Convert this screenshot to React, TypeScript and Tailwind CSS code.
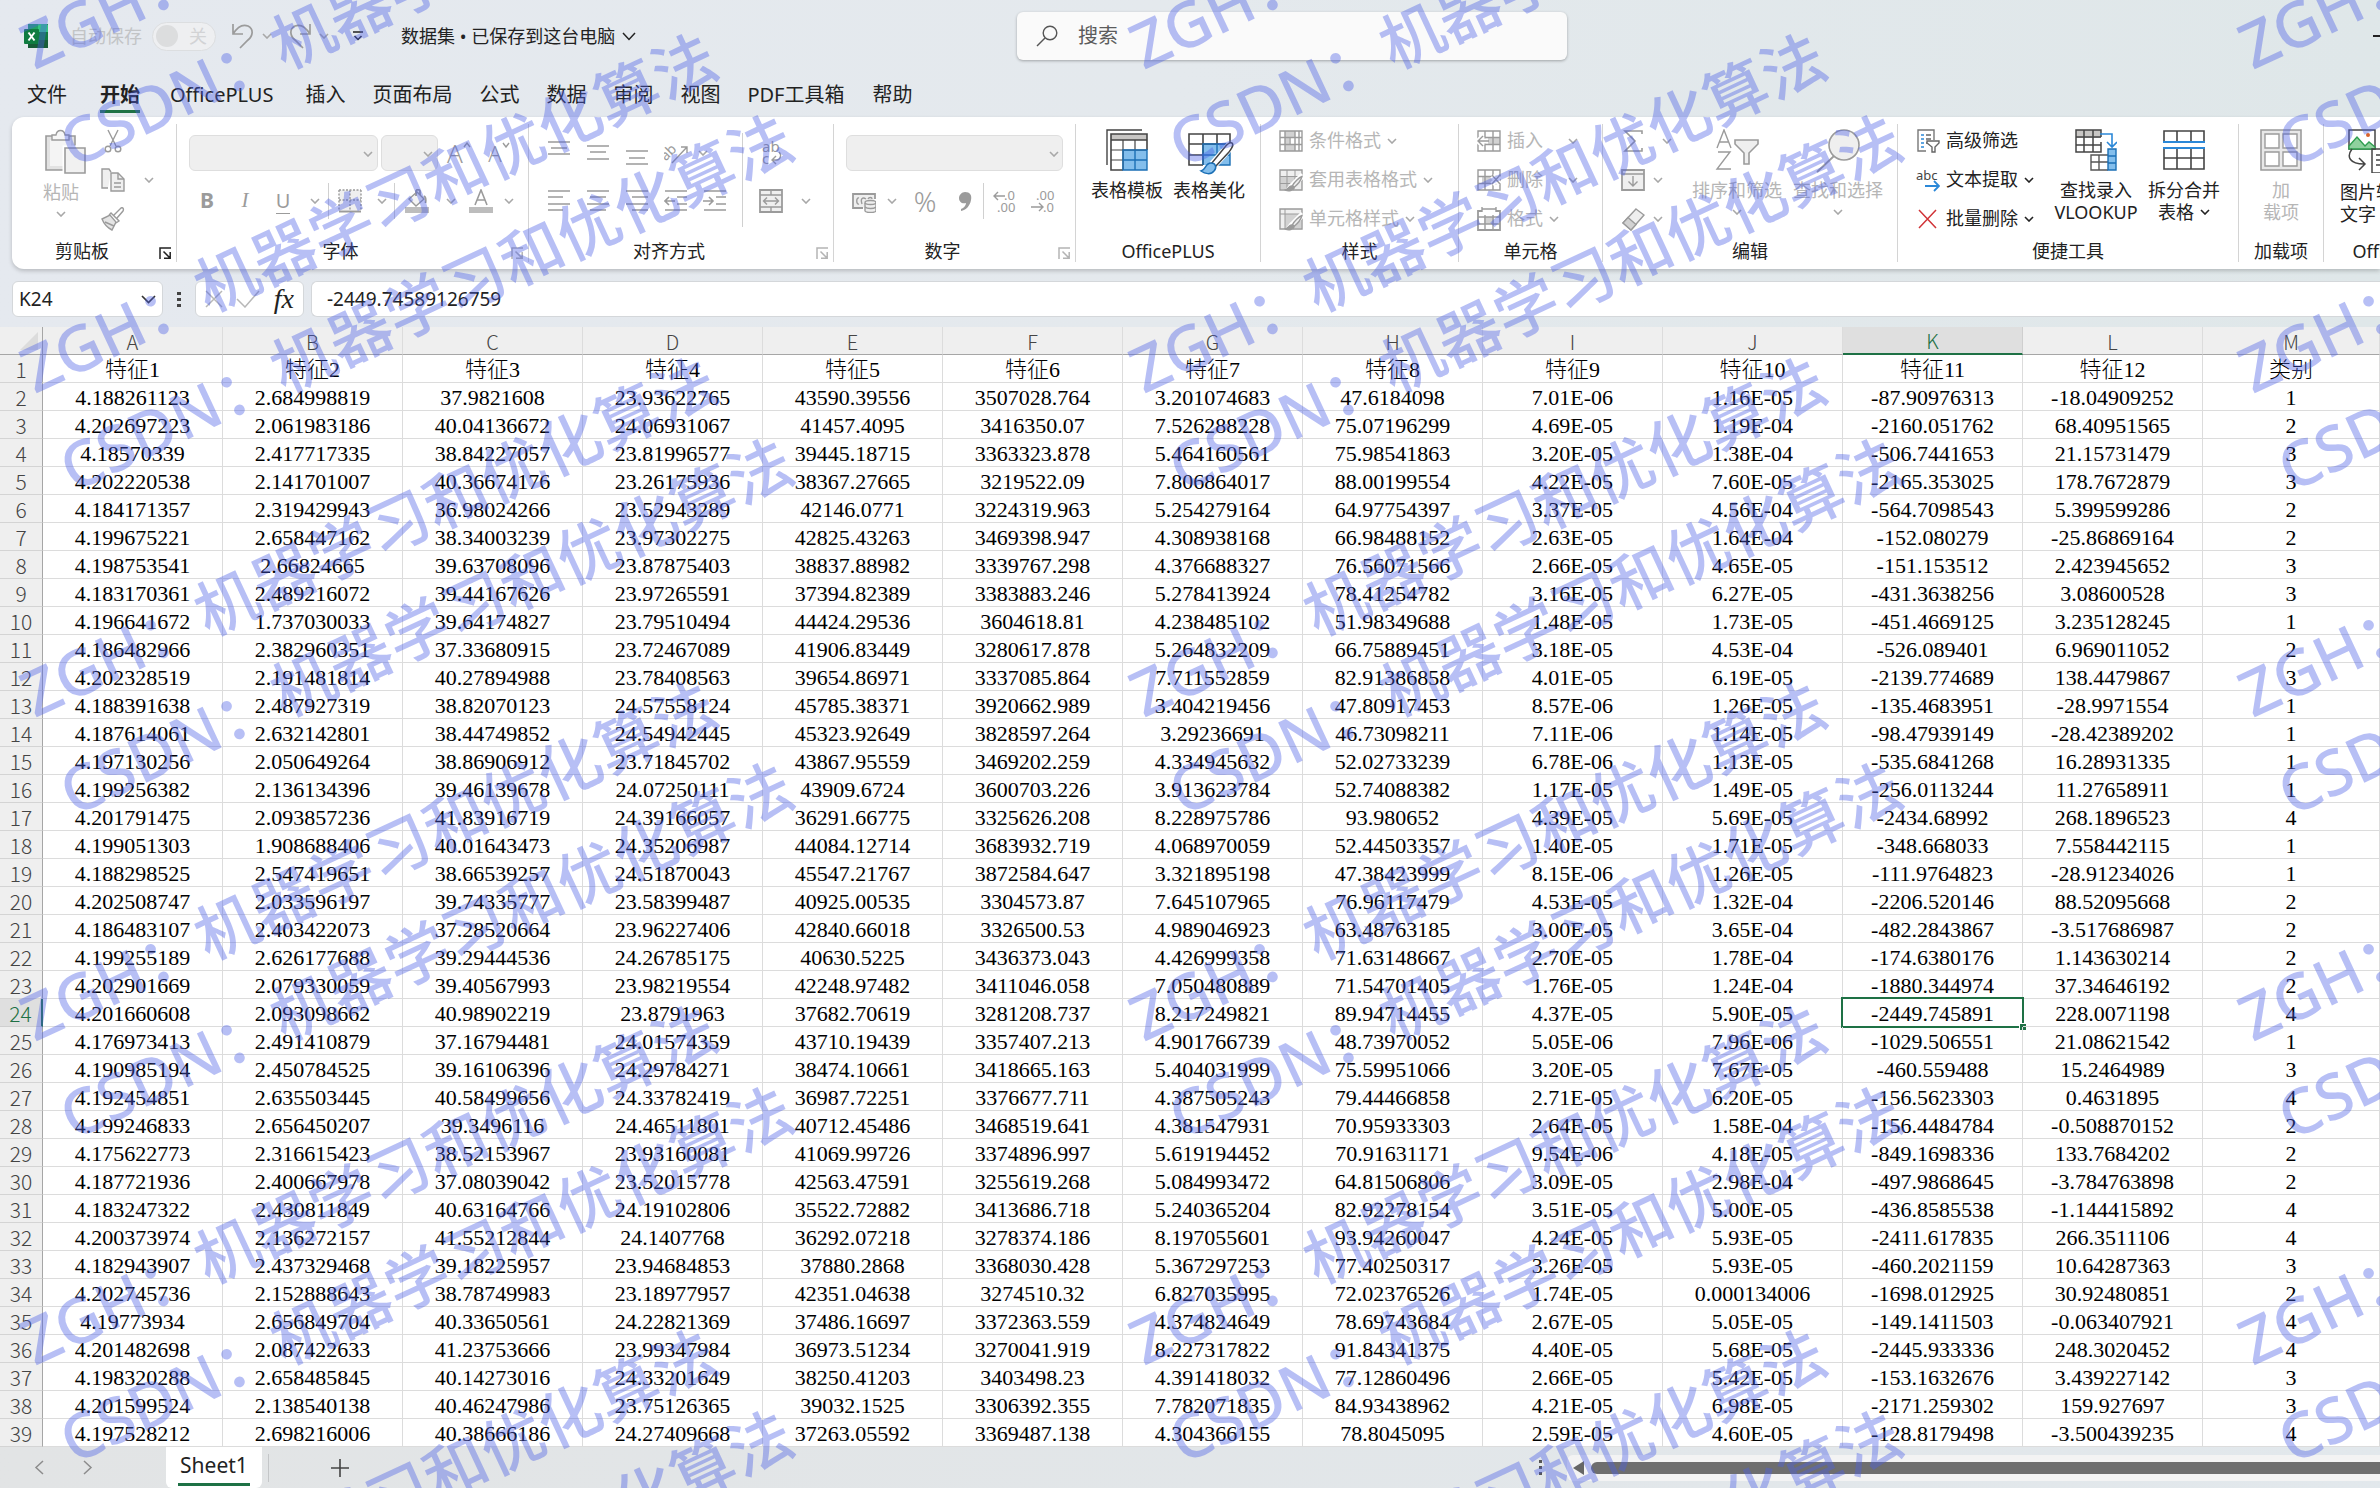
import type { ReactNode } from "react";

const columns = ["A", "B", "C", "D", "E", "F", "G", "H", "I", "J", "K", "L", "M"];

const rows = `特征1 特征2 特征3 特征4 特征5 特征6 特征7 特征8 特征9 特征10 特征11 特征12 类别
4.188261123 2.684998819 37.9821608 23.93622765 43590.39556 3507028.764 3.201074683 47.6184098 7.01E-06 1.16E-05 -87.90976313 -18.04909252 1
4.202697223 2.061983186 40.04136672 24.06931067 41457.4095 3416350.07 7.526288228 75.07196299 4.69E-05 1.19E-04 -2160.051762 68.40951565 2
4.18570339 2.417717335 38.84227057 23.81996577 39445.18715 3363323.878 5.464160561 75.98541863 3.20E-05 1.38E-04 -506.7441653 21.15731479 3
4.202220538 2.141701007 40.36674176 23.26175936 38367.27665 3219522.09 7.806864017 88.00199554 4.22E-05 7.60E-05 -2165.353025 178.7672879 3
4.184171357 2.319429943 36.98024266 23.52943289 42146.0771 3224319.963 5.254279164 64.97754397 3.37E-05 4.56E-04 -564.7098543 5.399599286 2
4.199675221 2.658447162 38.34003239 23.97302275 42825.43263 3469398.947 4.308938168 66.98488152 2.63E-05 1.64E-04 -152.080279 -25.86869164 2
4.198753541 2.66824665 39.63708096 23.87875403 38837.88982 3339767.298 4.376688327 76.56071566 2.66E-05 4.65E-05 -151.153512 2.423945652 3
4.183170361 2.489216072 39.44167626 23.97265591 37394.82389 3383883.246 5.278413924 78.41254782 3.16E-05 6.27E-05 -431.3638256 3.08600528 3
4.196641672 1.737030033 39.64174827 23.79510494 44424.29536 3604618.81 4.238485102 51.98349688 1.48E-05 1.73E-05 -451.4669125 3.235128245 1
4.186482966 2.382960351 37.33680915 23.72467089 41906.83449 3280617.878 5.264832209 66.75889451 3.18E-05 4.53E-04 -526.089401 6.969011052 2
4.202328519 2.191481814 40.27894988 23.78408563 39654.86971 3337085.864 7.711552859 82.91386858 4.01E-05 6.19E-05 -2139.774689 138.4479867 3
4.188391638 2.487927319 38.82070123 24.57558124 45785.38371 3920662.989 3.404219456 47.80917453 8.57E-06 1.26E-05 -135.4683951 -28.9971554 1
4.187614061 2.632142801 38.44749852 24.54942445 45323.92649 3828597.264 3.29236691 46.73098211 7.11E-06 1.14E-05 -98.47939149 -28.42389202 1
4.197130256 2.050649264 38.86906912 23.71845702 43867.95559 3469202.259 4.334945632 52.02733239 6.78E-06 1.13E-05 -535.6841268 16.28931335 1
4.199256382 2.136134396 39.46139678 24.07250111 43909.6724 3600703.226 3.913623784 52.74088382 1.17E-05 1.49E-05 -256.0113244 11.27658911 1
4.201791475 2.093857236 41.83916719 24.39166057 36291.66775 3325626.208 8.228975786 93.980652 4.39E-05 5.69E-05 -2434.68992 268.1896523 4
4.199051303 1.908688406 40.01643473 24.35206987 44084.12714 3683932.719 4.068970059 52.44503357 1.40E-05 1.71E-05 -348.668033 7.558442115 1
4.188298525 2.547419651 38.66539257 24.51870043 45547.21767 3872584.647 3.321895198 47.38423999 8.15E-06 1.26E-05 -111.9764823 -28.91234026 1
4.202508747 2.033596197 39.74335777 23.58399487 40925.00535 3304573.87 7.645107965 76.96117479 4.53E-05 1.32E-04 -2206.520146 88.52095668 2
4.186483107 2.403422073 37.28520664 23.96227406 42840.66018 3326500.53 4.989046923 63.48763185 3.00E-05 3.65E-04 -482.2843867 -3.517686987 2
4.199255189 2.626177688 39.29444536 24.26785175 40630.5225 3436373.043 4.426999358 71.63148667 2.70E-05 1.78E-04 -174.6380176 1.143630214 2
4.202901669 2.079330059 39.40567993 23.98219554 42248.97482 3411046.058 7.050480889 71.54701405 1.76E-05 1.24E-04 -1880.344974 37.34646192 2
4.201660608 2.093098662 40.98902219 23.8791963 37682.70619 3281208.737 8.217249821 89.94714455 4.37E-05 5.90E-05 -2449.745891 228.0071198 4
4.176973413 2.491410879 37.16794481 24.01574359 43710.19439 3357407.213 4.901766739 48.73970052 5.05E-06 7.96E-06 -1029.506551 21.08621542 1
4.190985194 2.450784525 39.16106396 24.29784271 38474.10661 3418665.163 5.404031999 75.59951066 3.20E-05 7.67E-05 -460.559488 15.2464989 3
4.192454851 2.635503445 40.58499656 24.33782419 36987.72251 3376677.711 4.387505243 79.44466858 2.71E-05 6.20E-05 -156.5623303 0.4631895 4
4.199246833 2.656450207 39.3496116 24.46511801 40712.45486 3468519.641 4.381547931 70.95933303 2.64E-05 1.58E-04 -156.4484784 -0.508870152 2
4.175622773 2.316615423 38.52153967 23.93160081 41069.99726 3374896.997 5.619194452 70.91631171 9.54E-06 4.18E-05 -849.1698336 133.7684202 2
4.187721936 2.400667978 37.08039042 23.52015778 42563.47591 3255619.268 5.084993472 64.81506806 3.09E-05 2.98E-04 -497.9868645 -3.784763898 2
4.183247322 2.430811849 40.63164766 24.19102806 35522.72882 3413686.718 5.240365204 82.92278154 3.51E-05 5.00E-05 -436.8585538 -1.144415892 4
4.200373974 2.136272157 41.55212844 24.1407768 36292.07218 3278374.186 8.197055601 93.94260047 4.24E-05 5.93E-05 -2411.617835 266.3511106 4
4.182943907 2.437329468 39.18225957 23.94684853 37880.2868 3368030.428 5.367297253 77.40250317 3.26E-05 5.93E-05 -460.2021159 10.64287363 3
4.202745736 2.152888643 38.78749983 23.18977957 42351.04638 3274510.32 6.827035995 72.02376526 1.74E-05 0.000134006 -1698.012925 30.92480851 2
4.19773934 2.656849704 40.33650561 24.22821369 37486.16697 3372363.559 4.374824649 78.69743684 2.67E-05 5.05E-05 -149.1411503 -0.063407921 4
4.201482698 2.087422633 41.23753666 23.99347984 36973.51234 3270041.919 8.227317822 91.84341375 4.40E-05 5.68E-05 -2445.933336 248.3020452 4
4.198320288 2.658485845 40.14273016 24.33201649 38250.41203 3403498.23 4.391418032 77.12860496 2.66E-05 5.42E-05 -153.1632676 3.439227142 3
4.201599524 2.138540138 40.46247986 23.75126365 39032.1525 3306392.355 7.782071835 84.93438962 4.21E-05 6.98E-05 -2171.259302 159.927697 3
4.197528212 2.698216006 40.38666186 24.27409668 37263.05592 3369487.138 4.304366155 78.8045095 2.59E-05 4.60E-05 -128.8179498 -3.500439235 4`
  .split("\n")
  .map((line) => line.split(" "));

const tabs = [
  { name: "文件", gap: "mr-[33px]" },
  { name: "开始", gap: "mr-[30px]" },
  { name: "OfficePLUS", gap: "mr-[32px]" },
  { name: "插入", gap: "mr-[27px]" },
  { name: "页面布局", gap: "mr-[27px]" },
  { name: "公式", gap: "mr-[27px]" },
  { name: "数据", gap: "mr-[27px]" },
  { name: "审阅", gap: "mr-[27px]" },
  { name: "视图", gap: "mr-[27px]" },
  { name: "PDF工具箱", gap: "mr-[28px]" },
  { name: "帮助", gap: "" },
];

const Chevron = ({ className = "text-[#a8a8a8]" }: { className?: string }) => (
  <svg className={`w-[10px] h-[6px] shrink-0 ${className}`} viewBox="0 0 10 6" fill="none" stroke="currentColor" strokeWidth="1.6">
    <path d="M1 1l4 4 4-4" />
  </svg>
);

const Icon = ({ className = "w-6 h-6", box = "0 0 24 24", children }: { className?: string; box?: string; children: ReactNode }) => (
  <svg className={`shrink-0 ${className}`} viewBox={box} fill="none" stroke="#9b9b9b" strokeWidth="1.4">
    {children}
  </svg>
);

const Divider = () => <span className="w-px h-9 bg-[#d0d0d0]" />;

const Separator = () => <div className="w-px my-[7px] shrink-0 bg-[#d4d4d4]" />;

const Group = ({ label, width, launcher, children }: { label: string; width: string; launcher?: "on" | "off"; children: ReactNode }) => (
  <section className={`flex flex-col shrink-0 pt-1 ${width}`}>
    <div className="h-[117px] flex">{children}</div>
    <div className="flex items-center h-[26px]">
      <h2 className="flex-1 text-center text-[18px] leading-[26px] text-[#222] whitespace-nowrap">{label}</h2>
      {launcher && (
        <button aria-label={`${label}设置`} className="w-6 h-[26px] pt-1 pl-[7px] flex items-center">
          <svg className={`w-3 h-3 ${launcher === "on" ? "text-[#222]" : "text-[#b4b4b4]"}`} viewBox="0 0 12 12" fill="none" stroke="currentColor" strokeWidth="1.5">
            <path d="M1 12V1h11M4.5 4.5l6 6M11.2 5v6.2H5" />
          </svg>
        </button>
      )}
    </div>
  </section>
);

const IconButton = ({ label, className = "w-[39px]", children }: { label: string; className?: string; children: ReactNode }) => (
  <button aria-label={label} className={`h-9 flex items-center justify-center shrink-0 ${className}`}>
    {children}
  </button>
);

const SmallButton = ({ label, icon, dark, arrow = true, wide }: { label: string; icon: ReactNode; dark?: boolean; arrow?: boolean; wide?: boolean }) => (
  <button className={`flex items-center h-[39px] whitespace-nowrap text-[18px] ${dark ? "text-[#222]" : "text-[#b6b6b6]"}`}>
    {icon}
    <span className={wide ? "ml-[6px] w-[61px] text-left" : "ml-[6px] mr-[6px]"}>{label}</span>
    {arrow && <Chevron className={dark ? "text-[#222]" : "text-[#a8a8a8]"} />}
  </button>
);

const LargeButton = ({ lines, icon, dark, arrow, className = "" }: { lines: string[]; icon: ReactNode; dark?: boolean; arrow?: "below" | "inline"; className?: string }) => (
  <button className={`flex flex-col items-center pt-2 whitespace-nowrap text-[18px] leading-[22px] ${dark ? "text-[#222]" : "text-[#b6b6b6]"} ${className}`}>
    {icon}
    <span className="mt-2">{lines[0]}</span>
    {lines[1] && (
      <span className="flex items-center gap-[6px]">
        {lines[1]}
        {arrow === "inline" && <Chevron className="text-[#222]" />}
      </span>
    )}
    {arrow === "below" && (
      <span className="h-[22px] flex items-center">
        <Chevron />
      </span>
    )}
  </button>
);

/* Horizontal bars of the alignment buttons */
const Bars = ({ d }: { d: string }) => (
  <Icon>
    <path strokeWidth="1.6" d={d} />
  </Icon>
);

const gridLines = "M1 2h22v20H1zM1 8.5h22M1 15.5h22M8 2v20M16 2v20";

const BrushGrid = ({ header }: { header?: boolean }) => (
  <Icon>
    <path fill="#efefef" d="M1 2h22v20H1z" />
    <path fill="#d2d2d2" stroke="none" d={header ? "M6 7h16v14H6z" : "M2 9h14v12H2z"} />
    <path d={header ? "M1 7h22M6 2v20" : "M1 8.5h22M1 15.5h12M8 2v20M16 2v11"} strokeWidth="1" />
    <path stroke="#fff" strokeWidth="6" d="M24 7L12 19M14 17l-5 6" />
    <path fill="#efefef" d="M23 8.5c-3 1-8 6-9.500 9l1.800 1.700C18 17 22 12 23 8.500z" />
    <path fill="#9b9b9b" d="M12.500 18c-2.500 0-3 3-6 4 3 1.500 8 .5 8.500-2z" />
  </Icon>
);

const ClipboardGroup = () => (
  <Group label="剪贴板" width="w-[164px]" launcher="on">
    <LargeButton
      className="w-[72px] ml-[13px]"
      lines={["粘贴"]}
      arrow="below"
      icon={
        <Icon className="w-[42px] h-[46px] ml-[7px] -mb-[2px]" box="0 0 42 46">
          <path fill="#e2e2e2" strokeWidth="1.6" d="M2 7h29v34H2z" />
          <path fill="#f4f4f4" stroke="none" d="M6 11h21v26H6z" />
          <path fill="#f7f7f7" d="M8 11V6h4c1-6 8-6 9 0h4v5z" />
          <path fill="#f4f4f4" stroke="#fff" strokeWidth="5" d="M21 19h20v25H21z" />
          <path fill="#f1f1f1" strokeWidth="1.600" d="M21 19h20v25H21z" />
        </Icon>
      }
    />
    <div className="flex flex-col ml-1">
      <button aria-label="剪切" className="h-[39px] w-6 flex items-center">
        <Icon>
          <path d="M7 1l8 16M17 1L9 17" />
          <circle cx="7" cy="20" r="2.800" />
          <circle cx="17" cy="20" r="2.800" />
        </Icon>
      </button>
      <button aria-label="复制" className="h-[39px] w-6 flex items-center">
        <Icon>
          <path fill="#efefef" d="M7 20H1V1h7l2 3" />
          <path fill="#efefef" d="M10 5h7l6 6v12H10z" />
          <path d="M17 5v6h6M13 15h7M13 19h7" />
        </Icon>
      </button>
      <button aria-label="格式刷" className="h-[39px] w-6 flex items-center">
        <Icon>
          <path fill="#e4e4e4" d="M1 12l8-4 6 7-4 8C7 21 3 17 1 12z" />
          <path d="M8 8l2-2 8 8-3 2M13 8l7-7c2-1 3 1 2 3l-6 7M4 15l9 4" />
        </Icon>
      </button>
    </div>
    <button aria-label="复制选项" className="ml-[19px] w-4 h-[117px]">
      <Chevron />
    </button>
  </Group>
);

const FontGroup = () => (
  <Group label="字体" width="w-[351px]" launcher="off">
    <div className="flex flex-col gap-3 pl-3 pt-[14px]">
      <div className="flex items-center">
        <div className="relative">
          <select aria-label="字体" disabled className="block appearance-none w-[189px] h-9 rounded-md bg-[#efefef] border border-[#dedede]" />
          <Chevron className="absolute right-[5px] top-4 text-[#a8a8a8]" />
        </div>
        <div className="relative ml-[3px]">
          <select aria-label="字号" disabled className="block appearance-none w-[57px] h-9 rounded-md bg-[#efefef] border border-[#dedede]" />
          <Chevron className="absolute right-[5px] top-4 text-[#a8a8a8]" />
        </div>
        <IconButton label="增大字号" className="w-[42px]">
          <span className="text-[26px] leading-9 font-light text-[#9b9b9b]">A</span>
          <svg className="w-2 h-[6px] mb-4" viewBox="0 0 8 6" fill="none" stroke="#9b9b9b" strokeWidth="1.4"><path d="M1 5l3-4 3 4" /></svg>
        </IconButton>
        <IconButton label="减小字号" className="w-[38px]">
          <span className="text-[22px] leading-9 font-light text-[#9b9b9b]">A</span>
          <svg className="w-2 h-[6px] mb-4" viewBox="0 0 8 6" fill="none" stroke="#9b9b9b" strokeWidth="1.4"><path d="M1 1l3 4 3-4" /></svg>
        </IconButton>
      </div>
      <div className="flex items-center text-[#9b9b9b]">
        <IconButton label="加粗" className="w-9"><b className="text-[21px]">B</b></IconButton>
        <IconButton label="倾斜" className="w-10"><i className="text-[21px] font-['Liberation_Serif',serif]">I</i></IconButton>
        <IconButton label="下划线" className="w-9"><span className="text-[20px] leading-6 border-b border-[#9b9b9b]">U</span></IconButton>
        <IconButton label="下划线选项" className="w-[27px]"><Chevron /></IconButton>
        <Divider />
        <IconButton label="边框" className="w-[41px]">
          <Icon>
            <path fill="#efefef" stroke="none" d="M1 1h22v20H1z" />
            <path strokeDasharray="2 1.500" d="M1 1h22M1 1v20M23 1v20M12 1v20M1 11h22" />
            <path strokeWidth="1.800" d="M1 22.500h22" />
          </Icon>
        </IconButton>
        <IconButton label="边框选项" className="w-6"><Chevron /></IconButton>
        <Divider />
        <IconButton label="填充颜色" className="w-[44px]">
          <Icon>
            <path fill="#bdbdbd" stroke="none" d="M0 18h24v6H0z" />
            <path fill="#f4f4f4" d="M4 10l8-7 7 7-8 7z" />
            <path d="M11 7V2c1-2 3-2 4 0v4M19 7c2 1 2 4 1.500 7" strokeWidth="1.800" />
          </Icon>
        </IconButton>
        <IconButton label="填充颜色选项" className="w-6"><Chevron /></IconButton>
        <IconButton label="字体颜色" className="w-9">
          <Icon>
            <path fill="#bdbdbd" stroke="none" d="M0 18h24v6H0z" />
            <path strokeWidth="1.600" d="M6 16l6-15 6 15M8 11h8" />
          </Icon>
        </IconButton>
        <IconButton label="字体颜色选项" className="w-5"><Chevron /></IconButton>
      </div>
    </div>
  </Group>
);

const AlignGroup = () => (
  <Group label="对齐方式" width="w-[304px]" launcher="off">
    <div className="flex flex-col gap-3 pl-[10px] pt-[14px]">
      <div className="flex items-center">
        <IconButton label="顶端对齐"><Bars d="M1 1h22M4 7h16M1 13h22" /></IconButton>
        <IconButton label="垂直居中"><Bars d="M1 5h22M4 11h16M1 18h22" /></IconButton>
        <IconButton label="底端对齐"><Bars d="M1 10h22M4 17h16M1 23h22" /></IconButton>
        <IconButton label="方向">
          <Icon>
            <text x="-3" y="15" transform="rotate(-45 6 12)" fontSize="14" fill="#9b9b9b" stroke="none">ab</text>
            <path d="M8 22L23 6M17 6h6v6" />
          </Icon>
        </IconButton>
        <IconButton label="方向选项" className="w-4"><Chevron /></IconButton>
      </div>
      <div className="flex items-center">
        <IconButton label="左对齐"><Bars d="M1 2h22M1 8h15M1 15h22M1 21h15" /></IconButton>
        <IconButton label="居中"><Bars d="M1 2h22M4 8h16M1 15h22M4 21h16" /></IconButton>
        <IconButton label="右对齐"><Bars d="M1 2h22M7 8h16M1 15h22M7 21h16" /></IconButton>
        <IconButton label="减少缩进"><Bars d="M1 2h22M13 8h10M13 15h10M1 21h22M11 12H2M5 8l-4 4 4 4" /></IconButton>
        <IconButton label="增加缩进"><Bars d="M1 2h22M13 8h10M13 15h10M1 21h22M0 12h9M6 8l4 4-4 4" /></IconButton>
      </div>
    </div>
    <span className="w-px h-[94px] mt-3 ml-[8px] bg-[#d0d0d0]" />
    <div className="flex flex-col gap-3 pt-[14px] pl-[8px]">
      <IconButton label="自动换行">
        <Icon>
          <text x="3" y="11" fontSize="15" fill="#9b9b9b" stroke="none">ab</text>
          <text x="3" y="23" fontSize="15" fill="#9b9b9b" stroke="none">c</text>
          <path d="M20 11c3 3 1 8-2 8h-5M17 15l-4 4 4 4" />
        </Icon>
      </IconButton>
      <div className="flex">
        <IconButton label="合并后居中">
          <Icon>
            <path fill="#efefef" strokeWidth="1.800" d="M1 1h22v22H1z" />
            <path d="M1 6h22M1 18h22M12 1v5M12 18v5M5 12h14M8 8.500L4.500 12 8 15.500M16 8.500l3.500 3.500-3.500 3.500" />
          </Icon>
        </IconButton>
        <IconButton label="合并选项" className="w-8"><Chevron /></IconButton>
      </div>
    </div>
  </Group>
);

const NumberGroup = () => (
  <Group label="数字" width="w-[241px]" launcher="off">
    <div className="flex flex-col gap-3 pl-3 pt-[14px]">
      <div className="relative">
        <select aria-label="数字格式" disabled className="block appearance-none w-[217px] h-9 rounded-md bg-[#efefef] border border-[#dedede]" />
        <Chevron className="absolute right-1 top-4 text-[#a8a8a8]" />
      </div>
      <div className="flex items-center text-[#9b9b9b]">
        <IconButton label="会计数字格式" className="w-9">
          <Icon>
            <path fill="#efefef" strokeWidth="1.800" d="M11 19H1V5h22v5" />
            <path d="M7 9c-3-1-3 7 0 6M10 15c-2-6 1-7 4-5M16 10c1-2 4-2 4 0" />
            <path fill="#efefef" d="M13 14v8c1 2 10 2 11 0v-8" />
            <ellipse cx="18.500" cy="13.500" rx="5.500" ry="2" fill="#efefef" />
            <path d="M13 18c2 2 9 2 11 0" />
          </Icon>
        </IconButton>
        <IconButton label="会计格式选项" className="w-5"><Chevron /></IconButton>
        <IconButton label="百分比样式" className="w-[46px]"><span className="text-[28px] font-light">%</span></IconButton>
        <IconButton label="千位分隔样式" className="w-[35px]">
          <Icon>
            <path fill="#9b9b9b" stroke="none" d="M11 3c5 0 7 3 6 8-1 6-5 10-10 11v-2c3-1 5-4 5-6-4 1-7-1-7-5 0-3 3-6 6-6z" />
          </Icon>
        </IconButton>
        <Divider />
        <IconButton label="增加小数位数">
          <Icon>
            <path d="M13 7H2M6 3L2 7l4 4" />
            <text x="12" y="11" fontSize="13" fill="#9b9b9b" stroke="none">.0</text>
            <text x="5" y="23" fontSize="13" fill="#9b9b9b" stroke="none">.00</text>
          </Icon>
        </IconButton>
        <IconButton label="减少小数位数">
          <Icon>
            <path d="M0 18h11M8 14l4 4-4 4" />
            <text x="5" y="11" fontSize="13" fill="#9b9b9b" stroke="none">.00</text>
            <text x="12" y="23" fontSize="13" fill="#9b9b9b" stroke="none">.0</text>
          </Icon>
        </IconButton>
      </div>
    </div>
  </Group>
);

const PlusGroup = () => (
  <Group label="OfficePLUS" width="w-[184px]">
    <LargeButton
      dark
      className="ml-[10px] w-[82px]"
      lines={["表格模板"]}
      icon={
        <Icon className="w-[42px] h-[42px]" box="0 0 42 42">
          <path stroke="#444" d="M1 36V1h35" />
          <path fill="#c8c6c4" stroke="none" d="M5 5h36v6H5z" />
          <path fill="#83beec" stroke="none" d="M17 21h24v20H17z" />
          <path stroke="#444" d="M17 11v30M29 11v10M5 21h36M5 31h12" strokeWidth="1.200" />
          <path stroke="#444" strokeWidth="1.600" d="M41 21V5H5v36h12M5 11h36" />
          <path stroke="#1b6fb5" d="M17 21h24v20H17zM29 21v20M17 31h24" />
        </Icon>
      }
    />
    <LargeButton
      dark
      className="w-[82px]"
      lines={["表格美化"]}
      icon={
        <Icon className="w-[46px] h-[46px] -mb-1 ml-1" box="0 0 46 46">
          <path fill="#83beec" stroke="none" d="M15 15h27v21H15z" />
          <path stroke="#444" strokeWidth="1.600" d="M42 15V5H1v31h14M1 15h41M1 26h14M15 5v31M29 5v10" />
          <path stroke="#1b6fb5" d="M15 26h27M29 15v21M42 15v21H28M15 36V15h27" />
          <path stroke="#fff" strokeWidth="9" d="M43 16L25 36" />
          <path stroke="#444" fill="#fff" strokeWidth="1.500" d="M44 14c2 2 0 5-3 9L27 38l-4-3 14-17c3-4 5-5 7-4z" />
          <path stroke="#1b6fb5" fill="#83beec" strokeWidth="1.500" d="M23 34c5 0 6 5 3 8-3 4-9 3-13 0 5-1 4-8 10-8z" />
        </Icon>
      }
    />
  </Group>
);

const StylesGroup = () => (
  <Group label="样式" width="w-[197px]">
    <div className="flex flex-col items-start pl-[18px]">
      <SmallButton
        label="条件格式"
        icon={
          <Icon>
            <path fill="#d2d2d2" stroke="none" d="M6 2h10v7H6zM6 16h10v6H6zM6 9h4v7H6z" />
            <path d="M1 2h22v20H1zM1 8.500h22M1 15.500h22M6 2v20M16 2v20M11 8v8M20 2v20" />
          </Icon>
        }
      />
      <SmallButton label="套用表格格式" icon={<BrushGrid />} />
      <SmallButton label="单元格样式" icon={<BrushGrid header />} />
    </div>
  </Group>
);

const CellsGroup = () => (
  <Group label="单元格" width="w-[143px]">
    <div className="flex flex-col items-start pl-[18px]">
      <SmallButton
        label="插入"
        wide
        icon={
          <Icon>
            <path fill="#d2d2d2" stroke="none" d="M8 8h15v8H8z" />
            <path d={gridLines} />
            <path stroke="#fff" strokeWidth="5" d="M11 12H0M6 7l-5 5 5 5" />
            <path d="M12 12H1M6 7l-5 5 5 5" />
          </Icon>
        }
      />
      <SmallButton
        label="删除"
        wide
        icon={
          <Icon>
            <path fill="#d2d2d2" stroke="none" d="M5 8h12v8H5z" />
            <path d={gridLines} />
            <path stroke="#fff" strokeWidth="5" d="M15 8l8 8M23 8l-8 8" />
            <path d="M15 7l8 9M23 7l-8 9" />
          </Icon>
        }
      />
      <SmallButton
        label="格式"
        icon={
          <Icon>
            <path fill="#d2d2d2" stroke="none" d="M7 10h10v7H7z" />
            <path strokeWidth="1.800" d="M5 4H1v19h22V4h-4" />
            <path d="M1 10h22M1 17h22M8 8v15M16 8v15M5 2h14M5 0v5M19 0v5" />
          </Icon>
        }
      />
    </div>
  </Group>
);

const EditGroup = () => (
  <Group label="编辑" width="w-[294px]">
    <div className="flex flex-col pl-[18px] w-[78px]">
      <button aria-label="自动求和" className="h-[39px] flex items-center gap-[17px]">
        <Icon><path strokeWidth="1.600" d="M21 5V2H4l10 10L4 22h17v-3" /></Icon>
        <Chevron />
      </button>
      <button aria-label="填充" className="h-[39px] flex items-center gap-2">
        <Icon>
          <path fill="#efefef" strokeWidth="1.800" d="M1 2h22v20H1z" />
          <path d="M1 6h22M12 8v10M7.500 13.500L12 18l4.500-4.500" />
        </Icon>
        <Chevron />
      </button>
      <button aria-label="清除" className="h-[39px] flex items-center gap-2">
        <Icon>
          <path fill="#efefef" d="M15 2l8 6-13 15-8-7z" />
          <path fill="#d2d2d2" d="M7 10.500l8 7-5 5.500-8-7z" />
        </Icon>
        <Chevron />
      </button>
    </div>
    <LargeButton
      className="w-[112px]"
      lines={["排序和筛选"]}
      arrow="below"
      icon={
        <Icon className="w-[44px] h-[44px] -mb-[2px]" box="0 0 44 44">
          <path d="M2 19L9 1l7 18M4.500 13h9M3 23h12L2 40h14" />
          <path fill="#efefef" strokeWidth="1.600" d="M20 11h23v4l-9 9v11h-5V24l-9-9z" />
        </Icon>
      }
    />
    <LargeButton
      className="w-[90px]"
      lines={["查找和选择"]}
      arrow="below"
      icon={
        <Icon className="w-[44px] h-[44px] -mb-[2px]" box="0 0 44 44">
          <circle cx="28" cy="16" r="15" fill="#efefef" strokeWidth="1.600" />
          <path strokeWidth="1.800" d="M18 27L1 43" />
        </Icon>
      }
    />
  </Group>
);

const ToolsGroup = () => (
  <Group label="便捷工具" width="w-[340px]">
    <div className="flex flex-col items-start pl-[18px] w-[146px]">
      <SmallButton
        dark
        arrow={false}
        label="高级筛选"
        icon={
          <Icon>
            <path stroke="#777" d="M10 22H2V1h16v10" />
            <path stroke="#2b88d8" d="M5 6h3M5 10h3M5 14h3M5 18h3" />
            <path stroke="#666" d="M10 6h5M10 10h5M10 14h2" />
            <path stroke="#666" fill="#fff" d="M11 12h12v2l-4 4v5h-3v-5l-5-4z" />
          </Icon>
        }
      />
      <SmallButton
        dark
        label="文本提取"
        icon={
          <Icon>
            <text x="0" y="12" fontSize="13" fill="#444" stroke="none">abc</text>
            <path stroke="#2b88d8" strokeWidth="1.800" d="M9 18h14M18 13l5 5-5 5" />
          </Icon>
        }
      />
      <SmallButton dark label="批量删除" icon={<Icon><path stroke="#d13438" strokeWidth="1.500" d="M3 3l17 18M20 3L3 21" /></Icon>} />
    </div>
    <LargeButton
      dark
      className="w-[104px]"
      lines={["查找录入", "VLOOKUP"]}
      icon={
        <Icon className="w-[42px] h-[42px]" box="0 0 42 42">
          <path fill="#c8c6c4" stroke="none" d="M1 1h25v8H1z" />
          <path stroke="#444" strokeWidth="1.500" d="M26 8V1H1v22h25V13M1 8h25M1 16h25M9 1v22M18 1v22" />
          <path fill="#83beec" stroke="none" d="M33 20h8v21h-8z" />
          <path stroke="#555" d="M33 26H16v15h17M16 33h17M24 26v15" />
          <path stroke="#1b6fb5" d="M33 20h8v21h-8zM33 27h8M33 34h8" />
          <path stroke="#2b88d8" strokeWidth="1.600" d="M25 5h12v13M32 13l5 5 5-5" />
        </Icon>
      }
    />
    <LargeButton
      dark
      className="w-[72px]"
      lines={["拆分合并", "表格"]}
      arrow="inline"
      icon={
        <Icon className="w-[42px] h-[42px]" box="0 0 42 42">
          <path stroke="#444" strokeWidth="1.600" d="M1 13V2h40v11M14 2v11M28 2v11M1 18v22h40V18M1 29h40M14 19v21M28 19v21" />
          <path stroke="#2b88d8" strokeWidth="1.800" d="M0 13h42M0 19h42" />
        </Icon>
      }
    />
  </Group>
);

const AddinsGroup = () => (
  <Group label="加载项" width="w-[84px]">
    <LargeButton
      className="w-full"
      lines={["加", "载项"]}
      icon={
        <Icon className="w-[42px] h-[42px]" box="0 0 42 42">
          <path fill="#e8e8e8" strokeWidth="1.600" d="M1 1h40v40H1z" />
          <path fill="#fff" d="M5 5h14v14H5zM23 5h14v14H23zM5 23h14v14H5zM23 23h14v14H23z" />
        </Icon>
      }
    />
  </Group>
);

const PictureGroup = () => (
  <Group label="OfficePLUS" width="w-[150px]">
    <LargeButton
      dark
      className="items-start pl-4"
      lines={["图片转", "文字"]}
      icon={
        <Icon className="w-[42px] h-[44px] ml-[8px]" box="0 0 42 44">
          <path fill="#fff" stroke="#444" strokeWidth="1.500" d="M1 1h26v19H1z" />
          <path fill="#8fd19e" stroke="#2e9e4f" d="M1 17l8-9 8 9 4-4 6 5v2H1z" />
          <circle cx="20" cy="6" r="2" fill="#d9632b" stroke="none" />
          <path stroke="#444" strokeWidth="1.500" d="M4 20c-6 8-2 15 12 15M11 29l6 6-6 6M24 20h17v24H24zM28 26h10M28 31h10M28 36h10" />
        </Icon>
      }
    />
  </Group>
);

const TitleBar = () => (
  <header className="h-[72px] relative flex items-center pl-6 text-[18px] text-[#222]">
    <svg className="w-6 h-6" viewBox="0 0 24 24">
      <path fill="#185c37" d="M4 0h20v24H4z" />
      <path fill="#21a366" d="M4 0h10v12H4z" />
      <path fill="#33c481" d="M14 0h9l1 1v7H14z" />
      <path fill="#107c41" d="M14 8h10v8H14z" />
      <rect y="5" width="15" height="15" rx="1" fill="#107c41" />
      <path stroke="#fff" strokeWidth="2" d="M4.500 8.500l6 8M10.500 8.500l-6 8" />
    </svg>
    <label className="flex items-center ml-[22px] text-[#c2c4c6]">
      自动保存
      <input type="checkbox" role="switch" className="sr-only" />
      <span className="ml-[10px] w-16 h-[29px] rounded-full border border-[#dcdee0] bg-[#eeeff1] flex items-center justify-between pl-[3px] pr-2 text-[#d2d3d5]">
        <span className="w-[22px] h-[22px] rounded-full bg-[#dcddde]" />
        关
      </span>
    </label>
    <button aria-label="撤消" className="ml-[15px]">
      <Icon className="w-6 h-7" box="0 0 24 28"><path strokeWidth="1.700" d="M2 2v10h10M2 12C7 4 12 2 17 4c6 3 5 10 0 14l-8 8" /></Icon>
    </button>
    <button aria-label="撤消选项" className="ml-[7px]"><Chevron /></button>
    <button aria-label="恢复" className="ml-[16px]">
      <Icon className="w-6 h-7" box="0 0 24 28"><path strokeWidth="1.700" d="M22 2v10H12M22 12C17 4 12 2 7 4c-6 3-5 10 0 14l8 8" /></Icon>
    </button>
    <button aria-label="恢复选项" className="ml-[7px]"><Chevron /></button>
    <button aria-label="自定义快速访问工具栏" className="ml-6">
      <svg className="w-[10px] h-[10px]" viewBox="0 0 10 10" fill="none" stroke="#222" strokeWidth="1.500"><path d="M0 1h10M1.500 5L5 8.500 8.500 5" /></svg>
    </button>
    <button className="ml-[38px] flex items-center gap-[7px] whitespace-nowrap">
      数据集 • 已保存到这台电脑
      <svg className="w-[14px] h-[9px]" viewBox="0 0 14 9" fill="none" stroke="#222" strokeWidth="1.500"><path d="M1 1l6 6.500L13 1" /></svg>
    </button>
    <label className="absolute left-[1017px] top-3 w-[550px] h-12 rounded-md bg-[#fafafa] shadow-[0_1px_3px_rgba(0,0,0,0.3)] flex items-center pl-[19px] gap-5">
      <svg className="w-[22px] h-[22px]" viewBox="0 0 22 22" fill="none" stroke="#555" strokeWidth="1.400">
        <circle cx="14" cy="8" r="6.800" />
        <path d="M9 13l-8 8" />
      </svg>
      <input aria-label="搜索" placeholder="搜索" className="flex-1 bg-transparent text-[20px] outline-none placeholder:text-[#5c5c5c]" />
    </label>
    <button aria-label="最小化" className="ml-auto w-[7px] h-4 flex items-center"><span className="w-[7px] h-[2px] bg-[#222]" /></button>
  </header>
);

const FormulaBar = () => (
  <div className="mt-3 mb-[10px] ml-3 h-9 flex items-stretch text-[19px] text-[#222]">
    <label className="w-[151px] bg-white rounded-md border border-[#d4d7da] flex items-center pl-[6px] pr-[6px]">
      <input aria-label="名称框" defaultValue="K24" className="w-full min-w-0 bg-transparent outline-none" />
      <svg className="w-[15px] h-[9px] shrink-0" viewBox="0 0 15 9" fill="none" stroke="#333" strokeWidth="1.700"><path d="M1 1l6.500 6.500L14 1" /></svg>
    </label>
    <div className="w-8 flex flex-col items-center justify-center gap-[3px]">
      <span className="w-1 h-[3px] bg-[#444]" />
      <span className="w-1 h-[3px] bg-[#444]" />
      <span className="w-1 h-[3px] bg-[#444]" />
    </div>
    <div className="w-[109px] bg-white rounded-md border border-[#d4d7da] flex items-center justify-between pl-[9px] pr-[9px]">
      <button aria-label="取消">
        <svg className="w-[18px] h-[18px]" viewBox="0 0 18 18" fill="none" stroke="#b8b8b8" strokeWidth="1.500"><path d="M1 1l16 16M17 1L1 17" /></svg>
      </button>
      <button aria-label="输入">
        <svg className="w-6 h-[18px]" viewBox="0 0 24 18" fill="none" stroke="#b8b8b8" strokeWidth="1.500"><path d="M1 9l8 8L23 1" /></svg>
      </button>
      <button aria-label="插入函数" className="text-[28px] leading-8 italic text-[#222] font-['Liberation_Serif',serif]">fx</button>
    </div>
    <input aria-label="编辑栏" defaultValue="-2449.74589126759" className="ml-[7px] flex-1 min-w-0 bg-white rounded-l-md border border-r-0 border-[#d4d7da] pl-[15px] outline-none" />
  </div>
);

const Sheet = () => (
  <table className="table-fixed w-full border-separate border-spacing-0 bg-white">
    <colgroup>
      <col className="w-[43px]" />
      {columns.map((c) => (
        <col key={c} className={c === "M" ? "" : "w-[180px]"} />
      ))}
    </colgroup>
    <thead>
      <tr className="h-7 bg-[#efefef] text-[#444] text-[20px] leading-[25px] font-['Noto_Sans_CJK_SC',sans-serif]">
        <td className="p-0 border-b border-r border-[#a6a6a6]">
          <svg className="w-[18px] h-[18px] ml-auto mr-1" viewBox="0 0 18 18"><path fill="#dcdcdc" d="M18 0v18H0z" /></svg>
        </td>
        {columns.map((c) => (
          <th
            key={c}
            scope="col"
            className={c === "K" ? "p-0 pt-px font-light bg-[#dfdfdf] text-[#1e7145] border-b-2 border-r border-b-[#1e7145] border-r-[#cfcfcf]" : "p-0 pt-[2px] font-light border-b border-r border-b-[#a6a6a6] border-r-[#dcdcdc]"}
          >
            {c}
          </th>
        ))}
      </tr>
    </thead>
    <tbody className="font-['Liberation_Serif','Noto_Sans_CJK_SC',serif] text-[22px] leading-[25px] text-black">
      {rows.map((row, r) => (
        <tr key={r} className={r === 0 ? "h-7 font-light" : "h-7"}>
          <th
            scope="row"
            className={
              r === 23
                ? "p-0 pt-[2px] font-light text-[21px] font-['Noto_Sans_CJK_SC',sans-serif] bg-[#dfdfdf] text-[#1e7145] border-b border-r-2 border-b-[#cfcfcf] border-r-[#1e7145]"
                : "p-0 pt-[2px] font-light text-[21px] font-['Noto_Sans_CJK_SC',sans-serif] bg-[#efefef] text-[#444] border-b border-r border-b-[#d4d4d4] border-r-[#a6a6a6]"
            }
          >
            {r + 1}
          </th>
          {row.map((value, c) => (
            <td key={c} className="relative p-0 pt-[2px] text-center border-b border-r border-[#dcdcdc]">
              {value}
              {r === 23 && c === 10 && (
                <span className="absolute -inset-[2px] border-2 border-[#1e7145]">
                  <span className="absolute -right-1 -bottom-1 w-[7px] h-[7px] bg-[#1e7145] border-l border-t border-white" />
                </span>
              )}
            </td>
          ))}
        </tr>
      ))}
    </tbody>
  </table>
);

const SheetBar = () => (
  <footer className="h-[41px] flex items-center bg-linear-to-r from-[#e2e4e5] to-[#e2e8ec] overflow-hidden">
    <button aria-label="上一张" className="ml-[34px]">
      <svg className="w-[10px] h-[15px]" viewBox="0 0 10 15" fill="none" stroke="#8c8c8c" strokeWidth="1.500"><path d="M9 1L2 7.500 9 14" /></svg>
    </button>
    <button aria-label="下一张" className="ml-[39px]">
      <svg className="w-[10px] h-[15px]" viewBox="0 0 10 15" fill="none" stroke="#8c8c8c" strokeWidth="1.500"><path d="M1 1l7 6.500L1 14" /></svg>
    </button>
    <button className="ml-[73px] w-[96px] h-[41px] bg-white rounded-b-md flex flex-col items-center text-[21px] leading-9 text-[#222]">
      Sheet1
      <span className="w-[72px] h-[3px] bg-[#1e7145]" />
    </button>
    <span className="ml-[6px] w-px h-7 bg-[#c4c6c8]" />
    <button aria-label="新工作表" className="ml-[62px]">
      <svg className="w-[18px] h-[18px]" viewBox="0 0 18 18" stroke="#444" strokeWidth="1.600"><path d="M9 0v18M0 9h18" /></svg>
    </button>
    <div className="ml-auto w-[841px] flex items-center">
      <div className="flex flex-col gap-[3px] w-7">
        <span className="w-[3px] h-[3px] bg-[#555]" />
        <span className="w-[3px] h-[3px] bg-[#555]" />
        <span className="w-[3px] h-[3px] bg-[#555]" />
      </div>
      <div className="flex-1 h-[26px] flex items-center bg-[#f3f3f3] rounded-l-md">
        <svg className="w-[11px] h-[14px] ml-[6px]" viewBox="0 0 11 14"><path fill="#666" d="M11 0v14L0 7z" /></svg>
        <span className="ml-[7px] flex-1 h-3 rounded-l-full bg-[#6e6e6e]" />
      </div>
    </div>
  </footer>
);

/* Each stamp is anchored at the end of its text line */
const stamps = [0, 1, 2].flatMap((col) =>
  [-1, 0, 1, 2, 3, 4, 5].flatMap((row) => [
    { text: "ZGH：机器学习和优化算法", x: 712 + col * 1109, y: 52 + row * 324 },
    { text: "CSDN：机器学习和优化算法", x: 788 + col * 1109, y: 133 + row * 324 },
  ])
);

const Watermark = () => (
  <div className="absolute inset-0 overflow-hidden pointer-events-none select-none">
    {stamps.map((s, i) => (
      <span
        key={i}
        className="absolute w-[900px] h-16 text-right origin-right -rotate-25 whitespace-nowrap font-medium text-[63px] leading-16 text-[#4b5fe6]/40"
        style={{ left: s.x - 900, top: s.y - 32 }}
      >
        {s.text}
      </span>
    ))}
  </div>
);

const App = () => {
  return (
    <main className="relative min-h-screen overflow-hidden bg-linear-to-r from-[#e5e9ef] via-[#e4e9ed] to-[#dfe7e9] font-['Noto_Sans','Noto_Sans_CJK_SC',sans-serif]">
      <TitleBar />
      <nav className="h-[45px] flex items-center pl-[27px] text-[20px] leading-[30px] text-[#222]">
        {tabs.map((tab) => (
          <button
            key={tab.name}
            className={`whitespace-nowrap border-b-[3px] pt-[3px] ${tab.gap} ${tab.name === "开始" ? "font-bold border-[#1e7145]" : "border-transparent"}`}
          >
            {tab.name}
          </button>
        ))}
      </nav>
      <div className="ml-3 h-[152px] flex overflow-hidden bg-white rounded-l-xl shadow-[0_2px_4px_rgba(0,0,0,0.2)]">
        <ClipboardGroup />
        <Separator />
        <FontGroup />
        <Separator />
        <AlignGroup />
        <Separator />
        <NumberGroup />
        <Separator />
        <PlusGroup />
        <Separator />
        <StylesGroup />
        <Separator />
        <CellsGroup />
        <Separator />
        <EditGroup />
        <Separator />
        <ToolsGroup />
        <Separator />
        <AddinsGroup />
        <Separator />
        <PictureGroup />
      </div>
      <FormulaBar />
      <Sheet />
      <SheetBar />
      <Watermark />
    </main>
  );
};

export default App;
